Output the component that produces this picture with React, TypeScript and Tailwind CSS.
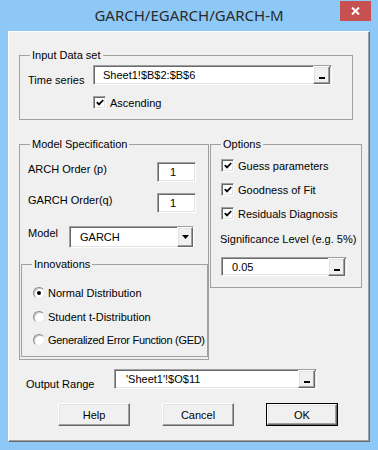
import React from "react";

const sunken =
  "border border-t-[#a0a0a0] border-l-[#a0a0a0] border-r-white border-b-white shadow-[inset_1px_1px_0_#696969,inset_-1px_-1px_0_#e3e3e3] bg-white";
const raised =
  "border border-t-white border-l-white border-r-[#696969] border-b-[#696969] shadow-[inset_-1px_-1px_0_#a0a0a0,inset_1px_1px_0_#e3e3e3] bg-[#f0f0f0]";

function PickButton() {
  return (
    <span className={`${raised} mr-[1px] flex h-full w-[17px] items-end justify-center pb-[4px]`}>
      <span className="h-[2px] w-[6px] bg-black" />
    </span>
  );
}

function RefBox({ className, text }: { className: string; text: string }) {
  return (
    <div className={`${sunken} ${className} flex items-center`}>
      <span className="flex-1 truncate">{text}</span>
      <div className="flex h-[18px] items-center">
        <PickButton />
      </div>
    </div>
  );
}

function Check() {
  return (
    <span className={`${sunken} flex h-[13px] w-[13px] shrink-0 items-center justify-center`}>
      <svg width="8" height="7" viewBox="0 0 8 7">
        <path d="M0.8 3.2 L3 5.4 L7.2 1" stroke="black" strokeWidth="1.8" fill="none" />
      </svg>
    </span>
  );
}

function Radio({ on }: { on?: boolean }) {
  return (
    <span className="flex h-[12px] w-[12px] shrink-0 items-center justify-center rounded-full border border-t-[#8a8a8a] border-l-[#8a8a8a] border-r-[#e8e8e8] border-b-[#e8e8e8] bg-white shadow-[inset_1px_1px_0_#c8c8c8]">
      {on && <span className="h-[4px] w-[4px] rounded-full bg-black" />}
    </span>
  );
}

function DlgButton({ label, isDefault }: { label: string; isDefault?: boolean }) {
  if (isDefault) {
    return (
      <div className="h-[23px] w-[72px] border border-black">
        <div className={`${raised} flex h-full w-full items-center justify-center`}>{label}</div>
      </div>
    );
  }
  return (
    <div className={`${raised} flex h-[23px] w-[72px] items-center justify-center`}>{label}</div>
  );
}

export default function App() {
  return (
    <div className="h-[450px] w-[378px] overflow-hidden bg-[#8ec8f6] font-['Liberation_Sans',Arial,sans-serif] text-[11px] leading-[14px] text-black">
      {/* Title bar */}
      <div className="relative h-[31px]">
        <div className="pt-[5px] text-center font-['Noto_Sans',sans-serif] text-[15px] leading-[20px] text-[#2b2b2b]">
          GARCH/EGARCH/GARCH-M
        </div>
        <div className="absolute right-[7px] top-[1px] flex h-[20px] w-[31px] items-center justify-center bg-[#c75050]">
          <svg width="9" height="8" viewBox="0 0 9 8">
            <path d="M1 0.5 L8 7.5 M8 0.5 L1 7.5" stroke="white" strokeWidth="2" />
          </svg>
        </div>
      </div>

      {/* Client area */}
      <div className="ml-[8px] flex h-[411px] w-[362px] flex-col border border-t-white border-l-white border-r-[#696969] border-b-[#696969] bg-[#f0f0f0] shadow-[inset_-1px_-1px_0_#a0a0a0]">
        {/* Input Data set */}
        <fieldset className="ml-[10px] mt-[16px] h-[72px] w-[334px] min-w-0 border border-[#a0a0a0]">
          <legend className="ml-[10px] px-[2px] leading-[14px]">Input Data set</legend>
          <div className="mt-[3px] flex items-start">
            <span className="ml-[8px] mt-[8px] w-[65px]">Time series</span>
            <RefBox className="h-[20px] w-[239px] pl-[9px]" text="Sheet1!$B$2:$B$6" />
          </div>
          <div className="ml-[73px] mt-[9px] flex h-[13px] items-center gap-[4px]">
            <Check />
            <span>Ascending</span>
          </div>
        </fieldset>

        <div className="ml-[10px] mt-[17px] flex items-start gap-[1px]">
          {/* Model Specification */}
          <fieldset className="h-[223px] w-[190px] min-w-0 shrink-0 border border-[#a0a0a0]">
            <legend className="ml-[10px] px-[2px] leading-[14px]">Model Specification</legend>
            <div className="mt-[11px] flex items-start">
              <span className="ml-[8px] w-[129px]">ARCH Order (p)</span>
              <div className={`${sunken} flex h-[20px] w-[39px] items-center pl-[12px]`}>1</div>
            </div>
            <div className="mt-[11px] flex items-start">
              <span className="ml-[8px] w-[129px]">GARCH Order(q)</span>
              <div className={`${sunken} flex h-[20px] w-[39px] items-center pl-[12px]`}>1</div>
            </div>
            <div className="mt-[13px] flex items-start">
              <span className="ml-[8px] w-[41px]">Model</span>
              <div className={`${sunken} flex h-[22px] w-[125px] items-center`}>
                <span className="flex-1 pl-[10px]">GARCH</span>
                <span className={`${raised} flex h-[20px] w-[16px] items-center justify-center`}>
                  <svg width="7" height="4" viewBox="0 0 7 4">
                    <path d="M0 0 H7 L3.5 4 Z" fill="black" />
                  </svg>
                </span>
              </div>
            </div>

            {/* Innovations */}
            <fieldset className="ml-[1px] mt-[9px] h-[100px] w-[187px] min-w-0 border border-[#a0a0a0]">
              <legend className="ml-[10px] px-[2px] leading-[14px]">Innovations</legend>
              <div className="ml-[11px] mt-[15px] flex h-[14px] items-center gap-[3px] whitespace-nowrap">
                <Radio on />
                <span>Normal Distribution</span>
              </div>
              <div className="ml-[11px] mt-[10px] flex h-[14px] items-center gap-[3px] whitespace-nowrap">
                <Radio />
                <span>Student t-Distribution</span>
              </div>
              <div className="ml-[11px] mt-[9px] flex h-[14px] items-center gap-[3px] whitespace-nowrap">
                <Radio />
                <span className="tracking-[-0.3px]">Generalized Error Function (GED)</span>
              </div>
            </fieldset>
          </fieldset>

          {/* Options */}
          <fieldset className="h-[151px] w-[152px] min-w-0 shrink-0 border border-[#a0a0a0]">
            <legend className="ml-[10px] px-[2px] leading-[14px]">Options</legend>
            <div className="ml-[10px] mt-[8px] flex h-[13px] items-center gap-[4px]">
              <Check />
              <span>Guess parameters</span>
            </div>
            <div className="ml-[10px] mt-[11px] flex h-[13px] items-center gap-[4px]">
              <Check />
              <span>Goodness of Fit</span>
            </div>
            <div className="ml-[10px] mt-[11px] flex h-[13px] items-center gap-[4px]">
              <Check />
              <span>Residuals Diagnosis</span>
            </div>
            <div className="ml-[9px] mt-[12px] whitespace-nowrap">Significance Level (e.g. 5%)</div>
            <RefBox className="ml-[10px] mt-[11px] h-[19px] w-[126px] pl-[10px]" text="0.05" />
          </fieldset>
        </div>

        {/* Output range */}
        <div className="mt-[9px] flex items-start">
          <span className="ml-[17px] mt-[8px] w-[88px]">Output Range</span>
          <RefBox className="h-[20px] w-[203px] pl-[11px]" text="'Sheet1'!$O$11" />
        </div>

        {/* Buttons */}
        <div className="ml-[49px] mt-[12px] flex gap-[32px]">
          <DlgButton label="Help" />
          <DlgButton label="Cancel" />
          <DlgButton label="OK" isDefault />
        </div>
      </div>
    </div>
  );
}
